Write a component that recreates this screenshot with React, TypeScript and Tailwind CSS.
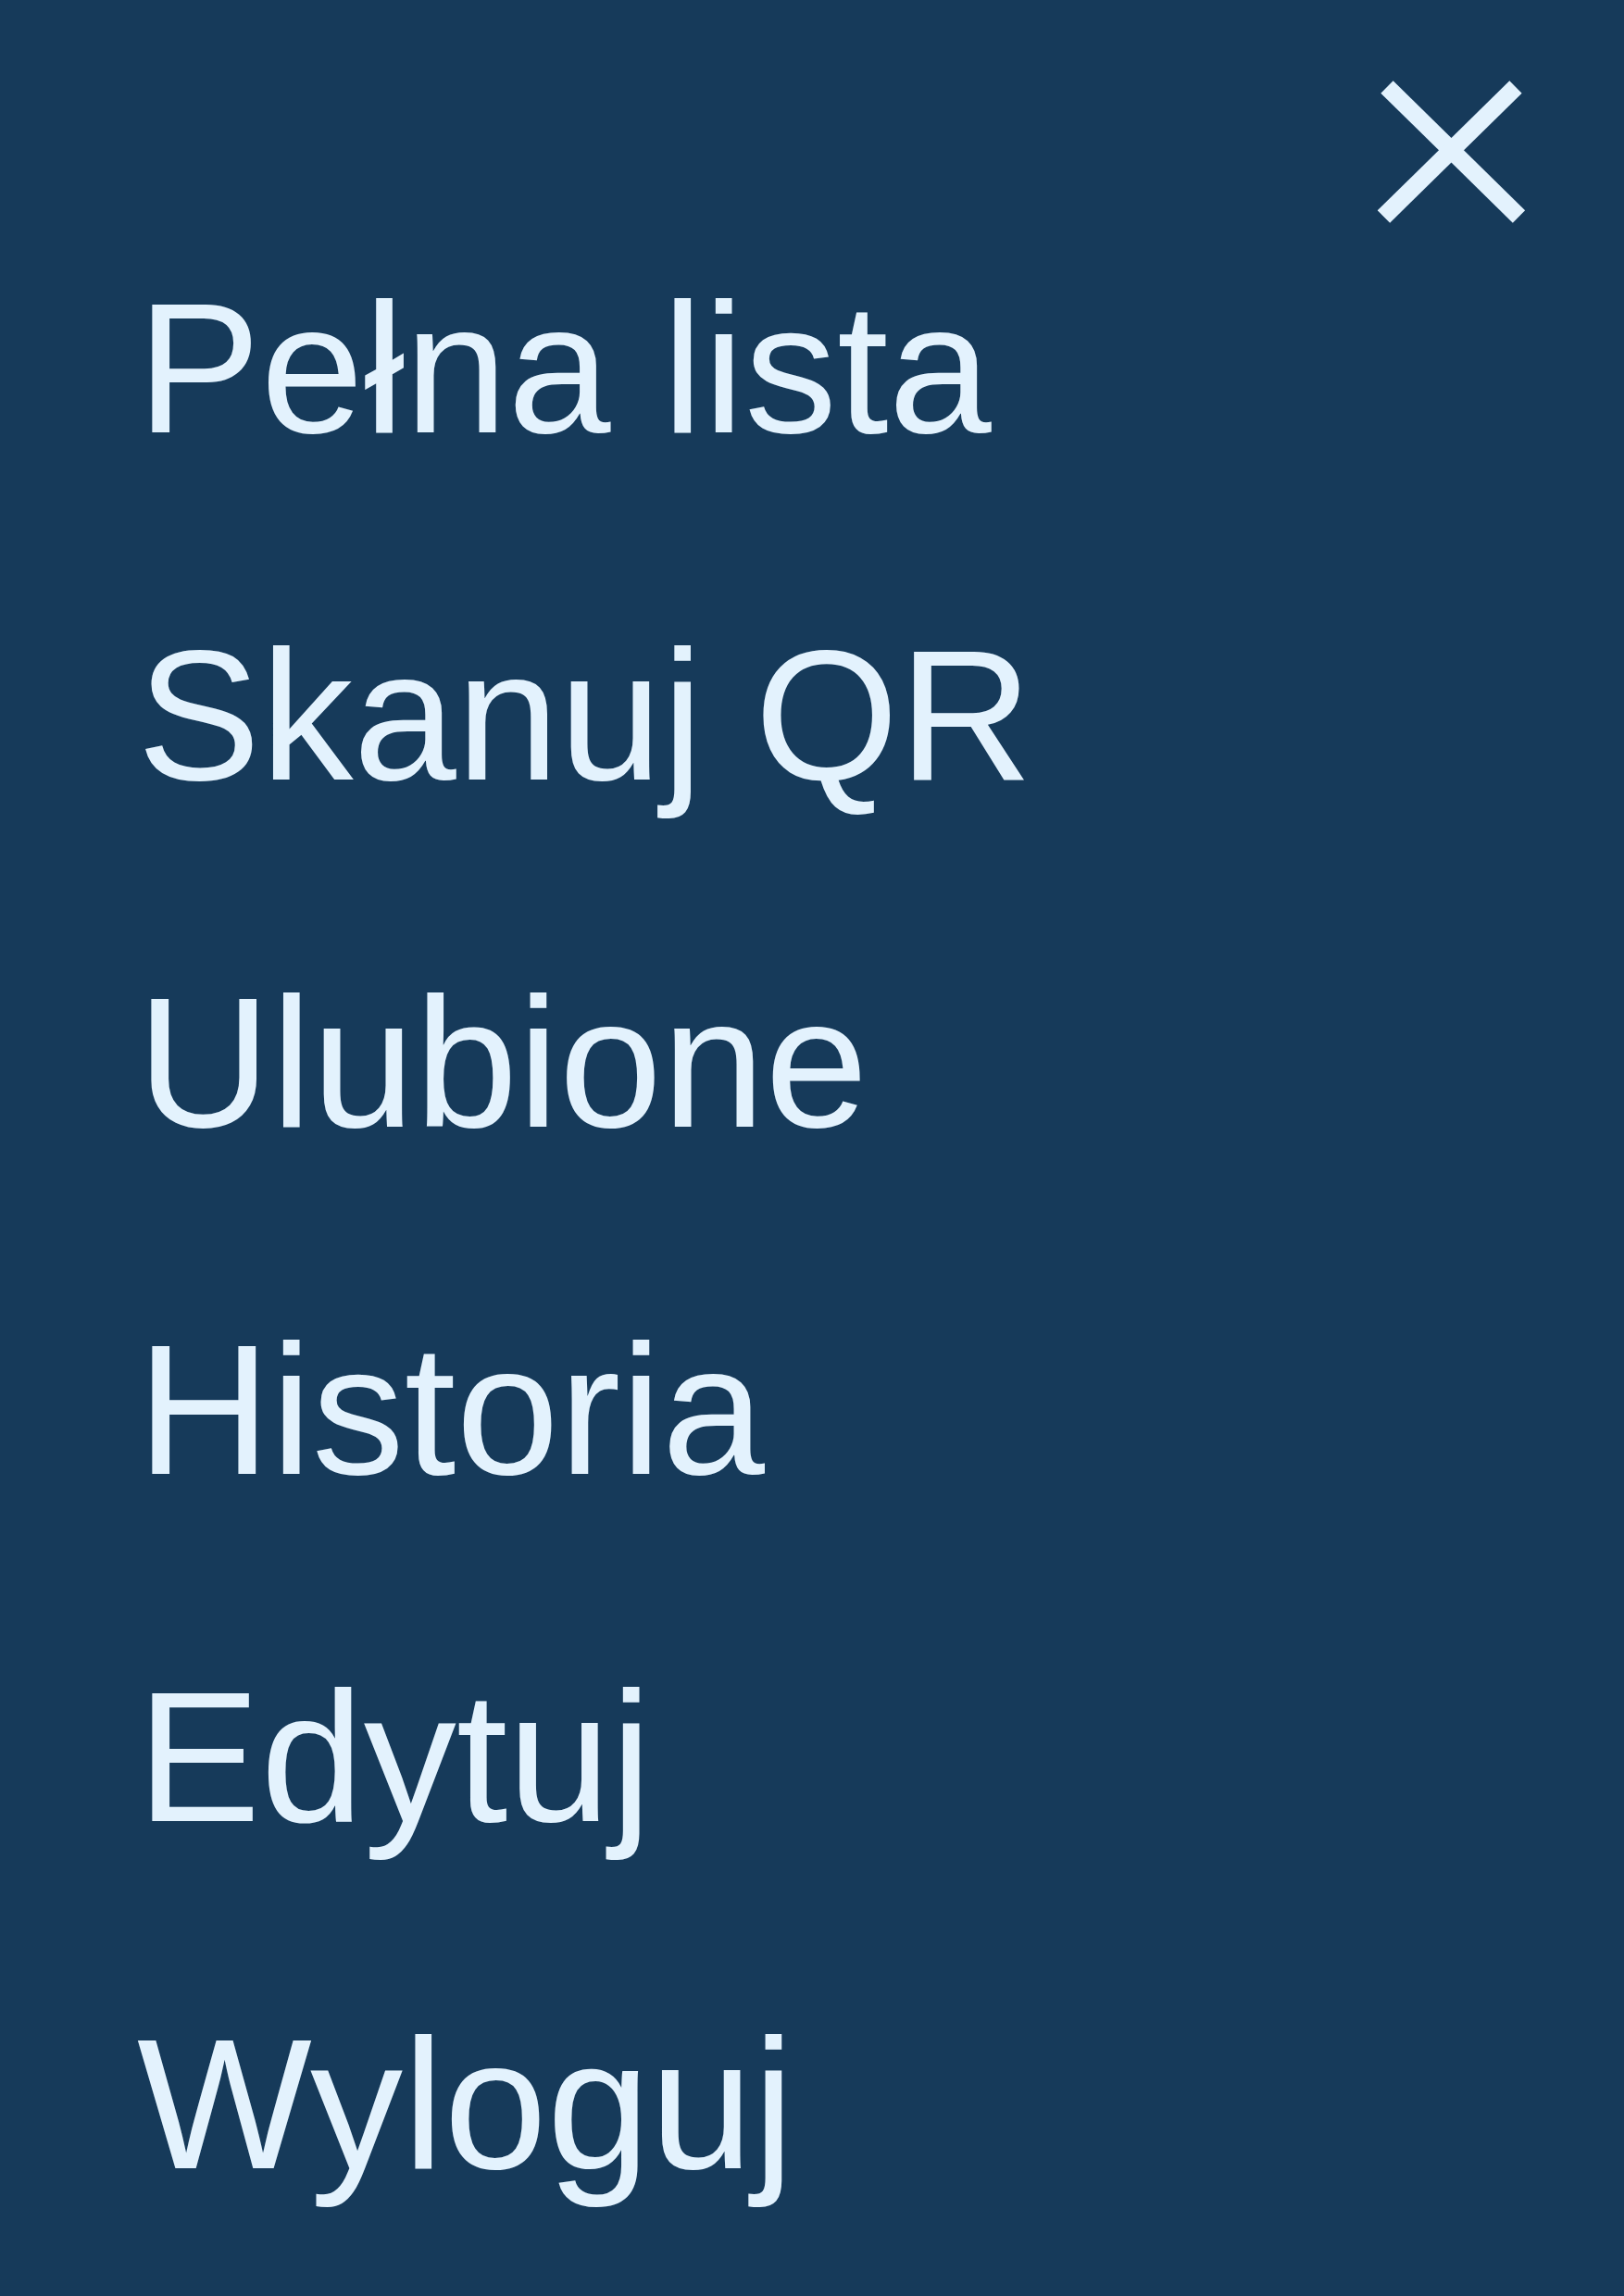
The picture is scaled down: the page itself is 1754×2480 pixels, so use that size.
const items = ["Pełna lista", "Skanuj QR", "Ulubione", "Historia", "Edytuj", "Wyloguj"];

export default function App() {
  return (
    <div
      className="min-h-[2480px] w-full bg-[#163a5a] text-[#e3f2fd]"
      style={{ fontFamily: '"Liberation Sans", Arial, sans-serif' }}
    >
      <div className="flex justify-end pt-[84px] pr-[106px]">
        <button type="button" aria-label="Zamknij" className="block">
          <svg width="160" height="160" viewBox="1488 84 160 160" className="block">
            <line x1="1498" y1="94" x2="1640.5" y2="234" stroke="#e3f2fd" strokeWidth="19" />
            <line x1="1637" y1="94" x2="1494.5" y2="234" stroke="#e3f2fd" strokeWidth="19" />
          </svg>
        </button>
      </div>
      <nav className="mt-[34px] flex flex-col gap-[135px] pl-[148px]">
        {items.map((label) => (
          <a key={label} href="#" className="block text-[200px] leading-[240px] whitespace-nowrap">
            {label}
          </a>
        ))}
      </nav>
    </div>
  );
}
